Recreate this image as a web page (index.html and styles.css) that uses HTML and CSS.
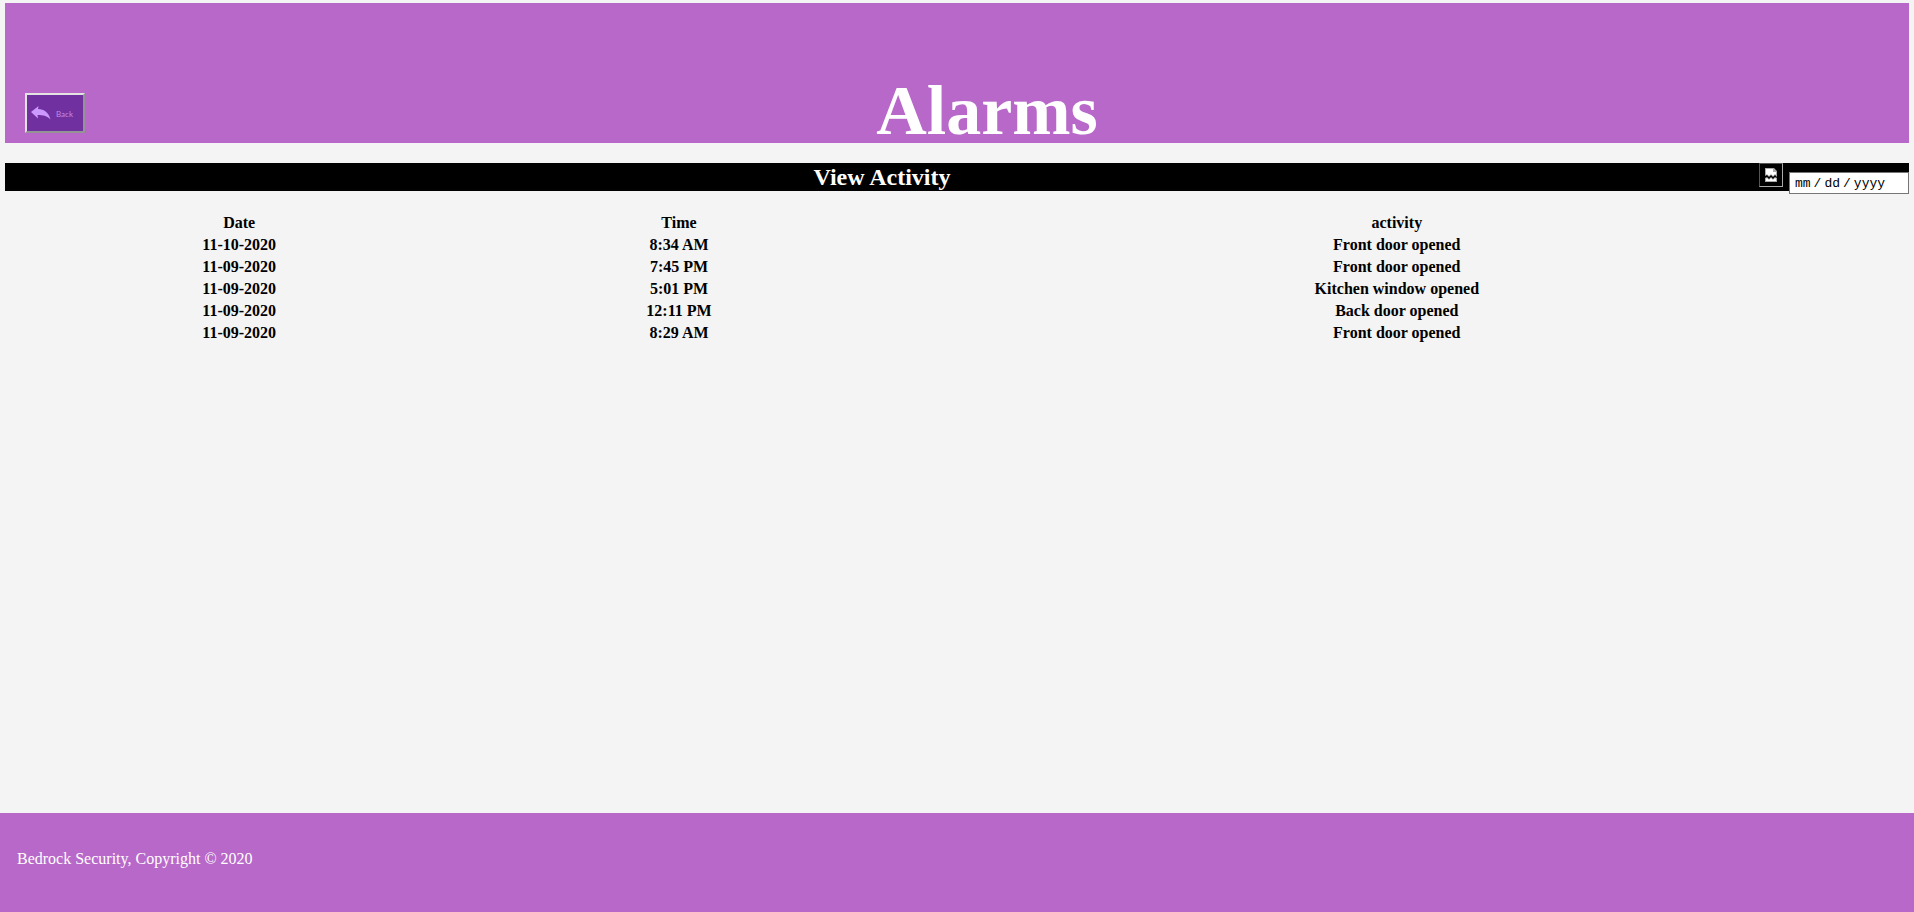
FILE: index.html
```html
<!DOCTYPE html>
<html lang="en">
<head>
<meta charset="utf-8">
<title>Alarms</title>
<link rel="stylesheet" href="styles.css">
</head>
<body>
<header class="banner">
  <button class="back" type="button">
    <svg class="back-arrow" viewBox="0 0 20 14" aria-hidden="true"><path d="M0 6 7.500 0 7 3C13 3 18 7 19.500 13.500C16 9.800 12 9 6.500 9L7 12.500Z"/></svg>
    <span>Back</span>
  </button>
  <h1 class="title">Alarms</h1>
</header>
<main class="content">
  <div class="bar">
    <h2 class="bar-title">View Activity</h2>
    <button class="picture" type="button" aria-label="Choose date">
      <svg class="picture-icon" viewBox="0 0 12 14" aria-hidden="true">
        <path fill="#aaa" d="M0 0H9L12 3V9L10 7 8 9 6 7 4 9 2 7 0 8ZM0 10 2 9 4 11 6 9 8 11 10 9 12 10V14H0Z"/>
        <path fill="#fff" d="M1 1H8V4H11V7L10 6 8 8 6 6 4 8 2 6 1 7ZM1 11 2 10 4 12 6 10 8 12 10 10 11 11V13H1Z"/>
      </svg>
    </button>
    <input class="date" type="date" aria-label="Activity date">
  </div>
  <table class="activity">
    <colgroup><col class="col-date"><col class="col-time"><col></colgroup>
    <thead><tr><th>Date</th><th>Time</th><th>activity</th></tr></thead>
    <tbody>
      <tr><td>11-10-2020</td><td>8:34 AM</td><td>Front door opened</td></tr>
      <tr><td>11-09-2020</td><td>7:45 PM</td><td>Front door opened</td></tr>
      <tr><td>11-09-2020</td><td>5:01 PM</td><td>Kitchen window opened</td></tr>
      <tr><td>11-09-2020</td><td>12:11 PM</td><td>Back door opened</td></tr>
      <tr><td>11-09-2020</td><td>8:29 AM</td><td>Front door opened</td></tr>
    </tbody>
  </table>
</main>
<footer class="footer">Bedrock Security, Copyright © 2020</footer>
</body>
</html>
```

FILE: styles.css
```css
* { box-sizing: border-box; }
body {
  margin: 0;
  min-height: 100vh;
  display: flex;
  flex-direction: column;
  background: #f4f4f4;
  color: #000;
  font: 16px/18px "Liberation Serif", "Times New Roman", serif;
}
.banner {
  display: flex;
  align-items: flex-end;
  margin: 3px 5px 20px;
  padding: 76px 20px 0;
  background: #b768c9;
}
.back {
  display: flex;
  align-items: center;
  gap: 5px;
  width: 60px;
  height: 40px;
  margin: 0 0 10px;
  padding: 0 4px;
  border: 2px solid;
  border-color: #e3e3e3 #949494 #949494 #e3e3e3;
  background: #7030a0;
  color: #c08ce8;
  font: 8px/10px Lato, sans-serif;
}
.back span { padding-top: 2px; }
.back-arrow { width: 20px; height: 14px; flex: none; fill: #cc99ff; }
.title {
  flex: 1;
  margin: 0;
  color: #fff;
  font-size: 70px;
  line-height: 64px;
  text-align: center;
}
.content { flex: 1; margin: 0 5px; }
.bar {
  display: flex;
  align-items: flex-start;
  height: 28px;
  background: #000;
}
.bar-title {
  flex: 1;
  margin: 0;
  color: #fff;
  font-size: 24px;
  line-height: 28px;
  text-align: center;
}
.picture {
  display: flex;
  align-items: center;
  justify-content: center;
  width: 24px;
  height: 24px;
  margin: 0 6px 0 0;
  padding: 0;
  border: 1px solid;
  border-color: #555 #aaa #aaa #555;
  background: #000;
}
.picture-icon { width: 12px; height: 14px; }
.date {
  width: 120px;
  height: 22px;
  margin: 9px 0 0;
  padding: 2px 4px 0;
  border: 1px solid #767676;
  background: #fff;
  color: #000;
  font: 13px/18px "Liberation Mono", "Courier New", monospace;
}
.date::-webkit-calendar-picker-indicator { display: none; }
.date::-webkit-datetime-edit { padding: 0; }
.date::-webkit-datetime-edit-text { padding: 0 2px; }
.activity {
  width: 100%;
  margin-top: 21px;
  border-collapse: collapse;
  table-layout: fixed;
  font-weight: bold;
  text-align: center;
}
.activity th, .activity td { padding: 2px 0; }
.col-date { width: 24.6%; }
.col-time { width: 21.6%; }
.footer {
  padding: 37px 17px 44px;
  background: #b768c9;
  color: #fff;
}
```
